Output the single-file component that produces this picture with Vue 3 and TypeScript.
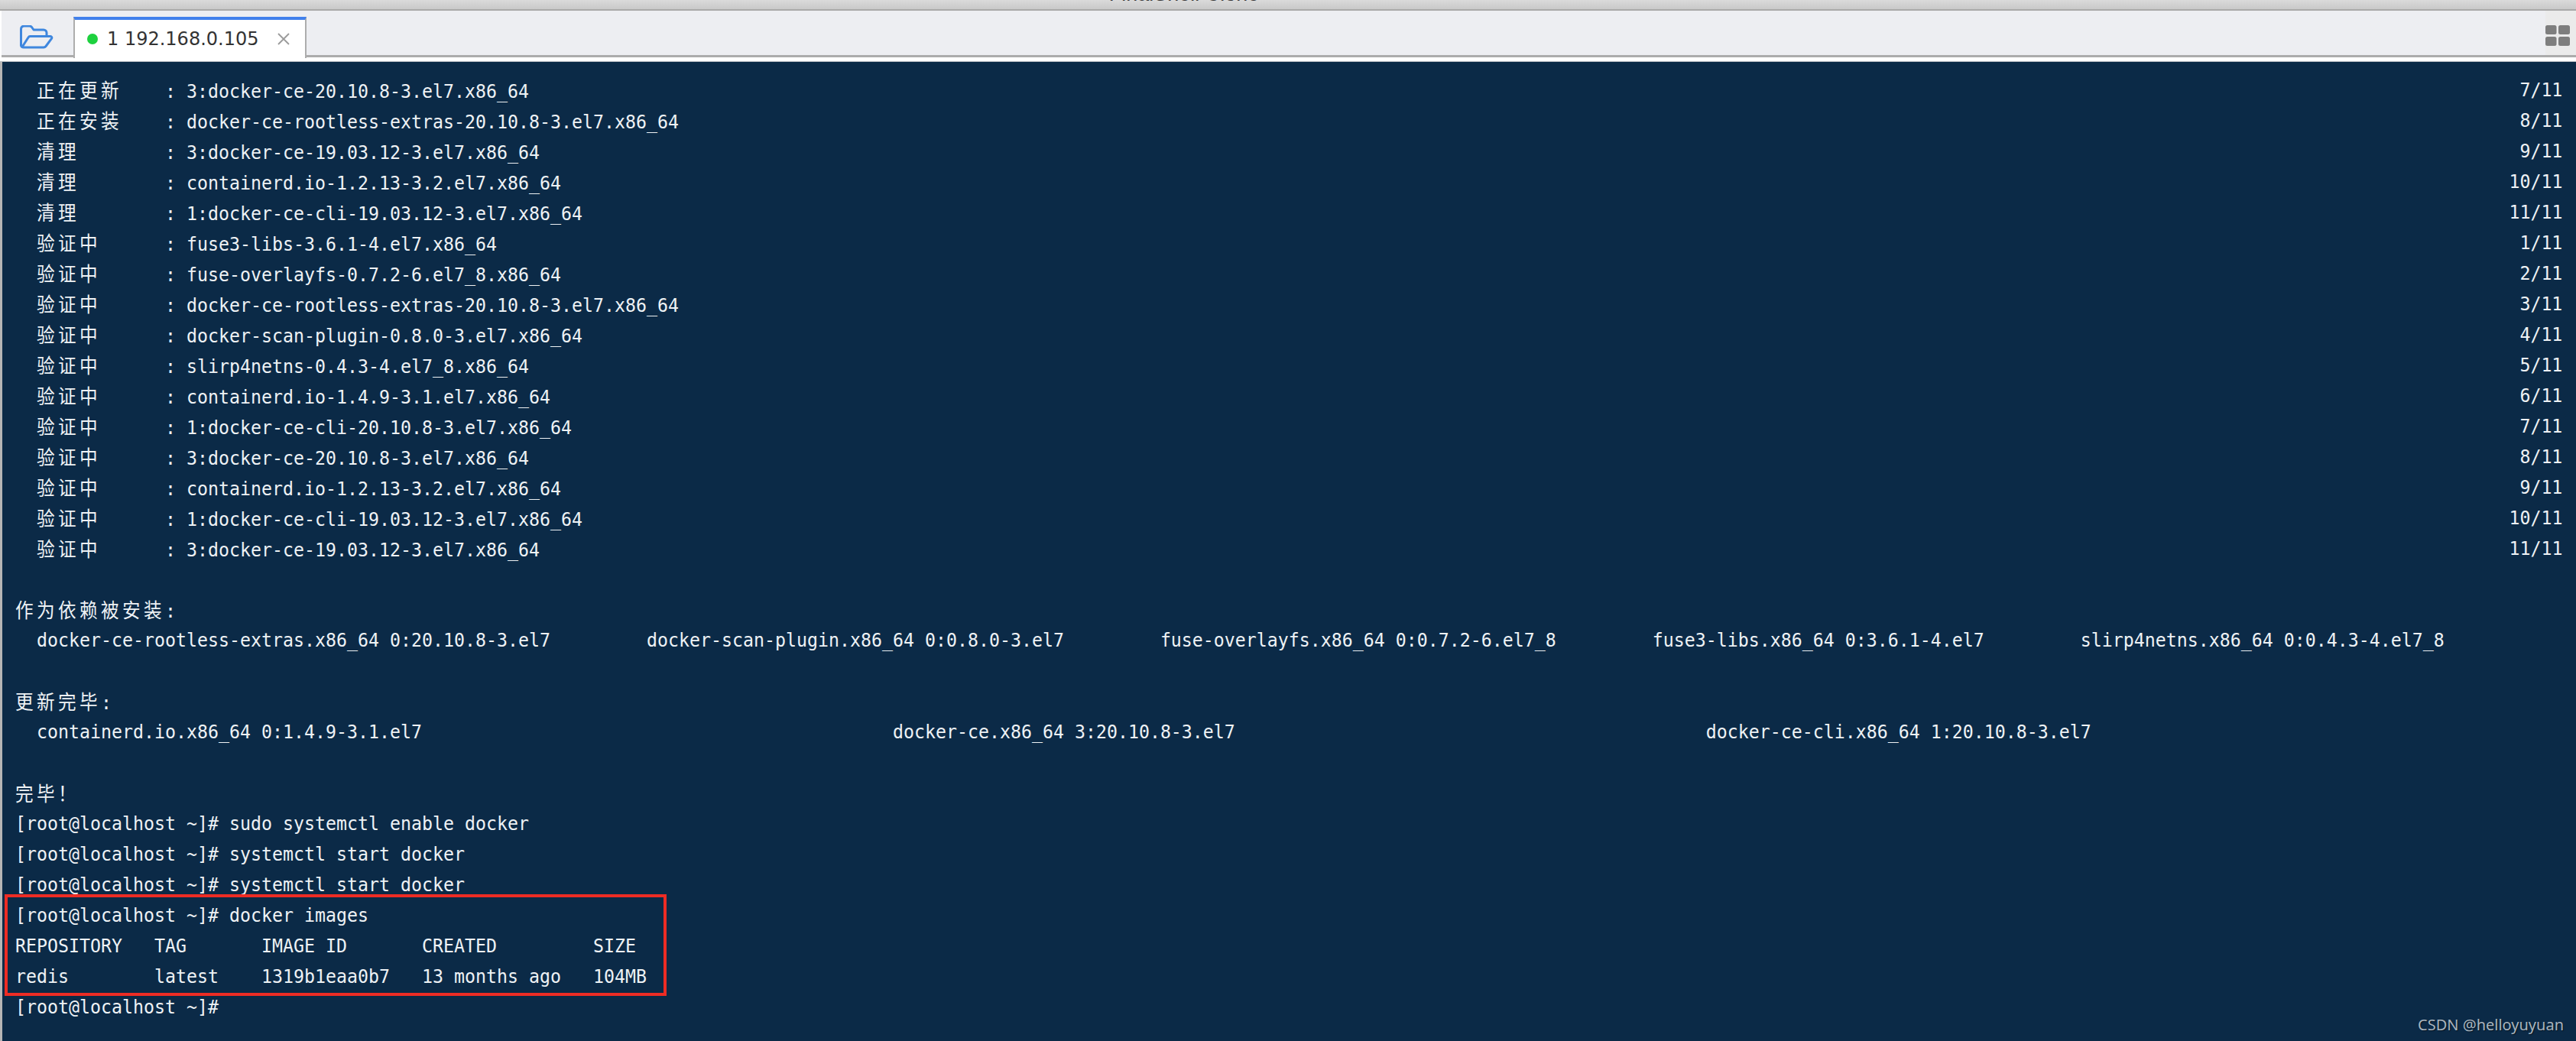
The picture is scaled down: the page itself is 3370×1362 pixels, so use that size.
<script setup lang="ts">
interface Row {
  text: string
  count?: string
}
interface Segment {
  text: string
  cjk: boolean
}

const rows: Row[] = [
  { text: '  正在更新    : 3:docker-ce-20.10.8-3.el7.x86_64', count: '7/11' },
  { text: '  正在安装    : docker-ce-rootless-extras-20.10.8-3.el7.x86_64', count: '8/11' },
  { text: '  清理        : 3:docker-ce-19.03.12-3.el7.x86_64', count: '9/11' },
  { text: '  清理        : containerd.io-1.2.13-3.2.el7.x86_64', count: '10/11' },
  { text: '  清理        : 1:docker-ce-cli-19.03.12-3.el7.x86_64', count: '11/11' },
  { text: '  验证中      : fuse3-libs-3.6.1-4.el7.x86_64', count: '1/11' },
  { text: '  验证中      : fuse-overlayfs-0.7.2-6.el7_8.x86_64', count: '2/11' },
  { text: '  验证中      : docker-ce-rootless-extras-20.10.8-3.el7.x86_64', count: '3/11' },
  { text: '  验证中      : docker-scan-plugin-0.8.0-3.el7.x86_64', count: '4/11' },
  { text: '  验证中      : slirp4netns-0.4.3-4.el7_8.x86_64', count: '5/11' },
  { text: '  验证中      : containerd.io-1.4.9-3.1.el7.x86_64', count: '6/11' },
  { text: '  验证中      : 1:docker-ce-cli-20.10.8-3.el7.x86_64', count: '7/11' },
  { text: '  验证中      : 3:docker-ce-20.10.8-3.el7.x86_64', count: '8/11' },
  { text: '  验证中      : containerd.io-1.2.13-3.2.el7.x86_64', count: '9/11' },
  { text: '  验证中      : 1:docker-ce-cli-19.03.12-3.el7.x86_64', count: '10/11' },
  { text: '  验证中      : 3:docker-ce-19.03.12-3.el7.x86_64', count: '11/11' },
  { text: '' },
  { text: '作为依赖被安装:' },
  { text: '  docker-ce-rootless-extras.x86_64 0:20.10.8-3.el7         docker-scan-plugin.x86_64 0:0.8.0-3.el7         fuse-overlayfs.x86_64 0:0.7.2-6.el7_8         fuse3-libs.x86_64 0:3.6.1-4.el7         slirp4netns.x86_64 0:0.4.3-4.el7_8' },
  { text: '' },
  { text: '更新完毕:' },
  { text: '  containerd.io.x86_64 0:1.4.9-3.1.el7                                            docker-ce.x86_64 3:20.10.8-3.el7                                            docker-ce-cli.x86_64 1:20.10.8-3.el7' },
  { text: '' },
  { text: '完毕！' },
  { text: '[root@localhost ~]# sudo systemctl enable docker' },
  { text: '[root@localhost ~]# systemctl start docker' },
  { text: '[root@localhost ~]# systemctl start docker' },
  { text: '[root@localhost ~]# docker images' },
  { text: 'REPOSITORY   TAG       IMAGE ID       CREATED         SIZE' },
  { text: 'redis        latest    1319b1eaa0b7   13 months ago   104MB' },
  { text: '[root@localhost ~]# ' }
]

function segments(text: string): Segment[] {
  const parts = text.match(/[\u3000-\u9fff\uff00-\uffef]+|[^\u3000-\u9fff\uff00-\uffef]+/g) ?? []
  return parts.map((part) => ({ text: part, cjk: /[\u3000-\u9fff\uff00-\uffef]/.test(part) }))
}
</script>

<template>
  <div class="window">
    <header class="titlebar"><span class="title">FinalShell Clone</span></header>

    <nav class="tabbar">
      <div class="folder">
        <svg width="44" height="31" viewBox="0 0 44 31" fill="none" stroke="#3f87de" stroke-width="3" stroke-linejoin="round" stroke-linecap="round">
          <path d="M1.500 26V5a4 4 0 0 1 4-4h7a4 4 0 0 1 3 1.500l2.500 3.500h13a4 4 0 0 1 4 4v4" />
          <path d="M3 28.500L11 16a3 3 0 0 1 3-1.500h26a1.800 1.800 0 0 1 1.500 2.800L34 27.500a4 4 0 0 1-3 1.500H5a3.500 3.500 0 0 1-3.500-3" />
        </svg>
      </div>
      <div class="tab">
        <span class="dot"></span>
        <span class="tab-label">1 192.168.0.105</span>
        <svg class="close" width="16" height="16" viewBox="0 0 16 16" stroke="#9b9b9b" stroke-width="1.800" fill="none">
          <path d="M1 1l14 14M15 1L1 15" />
        </svg>
      </div>
      <div class="tab-fill"></div>
      <div class="layout-btn">
        <svg width="32" height="27" viewBox="0 0 32 27" fill="#7e7e7e">
          <rect x="0" y="0" width="14.500" height="12" rx="2.500" />
          <rect x="17" y="0" width="15" height="12" rx="2.500" />
          <rect x="0" y="15" width="14.500" height="12" rx="2.500" />
          <rect x="17" y="15" width="15" height="12" rx="2.500" />
        </svg>
      </div>
    </nav>

    <div class="gap"></div>

    <main class="terminal">
      <div class="screen">
        <div v-for="(row, i) in rows" :key="i" class="row">
          <span class="text"><span
            v-for="(seg, j) in segments(row.text)"
            :key="j"
            :class="{ cjk: seg.cjk }"
          >{{ seg.text }}</span></span>
          <span v-if="row.count">{{ row.count }}</span>
        </div>
      </div>
      <div class="highlight"></div>
      <div class="watermark">CSDN @helloyuyuan</div>
    </main>
  </div>
</template>

<style scoped>
.window {
  width: 3370px;
  height: 1362px;
  display: flex;
  flex-direction: column;
  overflow: hidden;
  background: #ffffff;
}

.titlebar {
  height: 14px;
  flex: none;
  box-sizing: border-box;
  border-bottom: 2px solid #a9a9a9;
  background: linear-gradient(#dadada, #c9c9c9);
  display: flex;
  justify-content: center;
  overflow: hidden;
  padding-right: 272px;
}

.title {
  font: 27px/1 "Liberation Sans", sans-serif;
  color: #3a3a3a;
  margin-top: -21px;
  white-space: nowrap;
}

.tabbar {
  height: 61px;
  flex: none;
  box-sizing: border-box;
  margin-left: 2px;
  display: flex;
  align-items: stretch;
  background: #edeef2;
}

.folder {
  width: 94px;
  box-sizing: border-box;
  padding: 19px 0 0 24px;
  border-bottom: 3px solid #acacac;
}

.tab {
  width: 305px;
  flex: none;
  box-sizing: border-box;
  margin-top: 8px;
  margin-bottom: -1px;
  border-top: 4px solid #4180ec;
  border-left: 2px solid #adadad;
  border-right: 2px solid #adadad;
  background: #ffffff;
  display: flex;
  align-items: center;
  padding: 0 0 0 16px;
  position: relative;
  z-index: 1;
}

.dot {
  width: 14px;
  height: 14px;
  flex: none;
  border-radius: 50%;
  background: #1ed13f;
  margin-right: 12px;
}

.tab-label {
  font: 24px/1 "DejaVu Sans", sans-serif;
  color: #333333;
  white-space: nowrap;
  flex: none;
}

.close {
  flex: none;
  margin-left: 25px;
  overflow: visible;
}

.tab-fill {
  flex: 1;
  border-bottom: 3px solid #acacac;
}

.layout-btn {
  width: 40px;
  box-sizing: border-box;
  padding: 19px 0 0 0;
  background: #ebebeb;
  border-bottom: 3px solid #acacac;
}

.gap {
  height: 6px;
  flex: none;
  background: #ffffff;
  border-bottom: 1px solid #b9bdc2;
  box-sizing: border-box;
}

.terminal {
  flex: 1;
  position: relative;
  box-sizing: border-box;
  border-left: 3px solid #b6b6b6;
  background: #0b2a47;
  padding: 16px 0 0 17px;
  overflow: hidden;
}

.screen {
  width: 3668px;
  transform: scaleX(0.9085);
  transform-origin: left top;
  font: 25.6px/40px "DejaVu Sans Mono", monospace;
  color: #eef2f5;
}

.row {
  height: 40px;
  display: flex;
  justify-content: space-between;
  white-space: pre;
  overflow: hidden;
}

.cjk {
  font-family: "Noto Sans CJK SC", sans-serif;
  font-size: 26px;
  font-weight: 400;
  letter-spacing: 4.82px;
  line-height: 40px;
}

.highlight {
  position: absolute;
  left: 3px;
  top: 1089px;
  width: 866px;
  height: 133px;
  box-sizing: border-box;
  border: 4px solid #ee2c24;
}

.watermark {
  position: absolute;
  right: 16px;
  bottom: 11px;
  font: 20px/1 "Noto Sans", sans-serif;
  color: #a8b4be;
  text-shadow: 1px 1px 1px rgba(0, 0, 0, 0.5);
}
</style>
